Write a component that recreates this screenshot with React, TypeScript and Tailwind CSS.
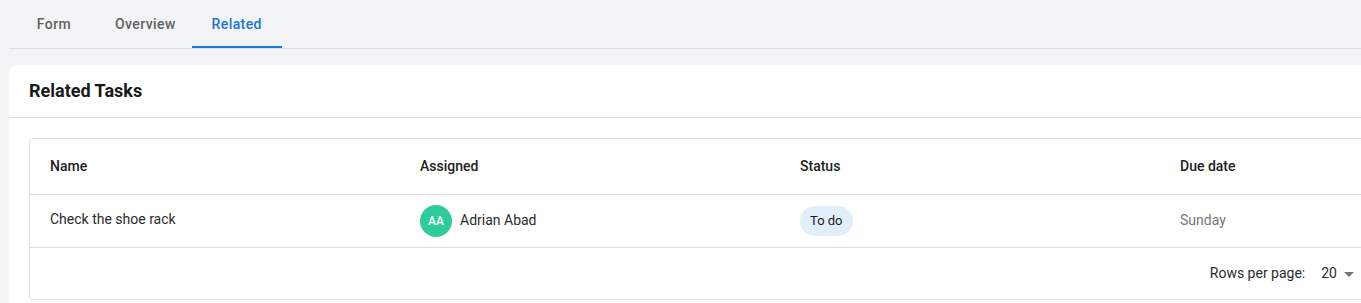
import React, { useState } from 'react';

const tabs = ['Form', 'Overview', 'Related'];

const tasks = [
  { id: 1, name: 'Check the shoe rack', assignee: 'Adrian Abad', initials: 'AA', status: 'To do', due: 'Sunday' },
];

const App: React.FC = () => {
  const [activeTab, setActiveTab] = useState('Related');

  return (
    <div className="h-[303px] w-full overflow-hidden bg-[#f2f3f5] font-['Roboto',_'Liberation_Sans',_sans-serif] text-[#212121]">
      <div className="w-[1580px] pl-[9px]">
        {/* Tabs */}
        <div className="flex h-[49px] border-b border-[#dcdde1]">
          {tabs.map((tab) => (
            <button
              key={tab}
              onClick={() => setActiveTab(tab)}
              className={`relative h-[48px] min-w-[90px] px-4 text-[14px] font-medium tracking-[0.4px] ${activeTab === tab ? 'text-[#1976d2]' : 'text-[#616161]'}`}
            >
              {tab}
              {activeTab === tab && <span className="absolute bottom-0 left-0 right-0 h-[2px] bg-[#1976d2]" />}
            </button>
          ))}
        </div>

        {/* Card */}
        <div className="mt-4 rounded-lg bg-white">
          <div className="flex h-[53px] items-center border-b border-[#e0e0e0] px-5 pb-[2px]">
            <h2 className="text-[18px] font-bold text-[#1a1a1a]">Related Tasks</h2>
          </div>
          <div className="p-5">
            <div className="rounded border border-[#e0e0e0]">
              <div className="grid h-[56px] grid-cols-[370px_380px_380px_1fr] items-center border-b border-[#e0e0e0] text-[14px] font-medium">
                <div className="px-5">Name</div>
                <div className="px-5">Assigned</div>
                <div className="px-5">Status</div>
                <div className="px-5">Due date</div>
              </div>
              {tasks.map((t) => (
                <div key={t.id} className="grid h-[53px] grid-cols-[370px_380px_380px_1fr] items-center border-b border-[#e0e0e0] text-[14px]">
                  <div className="px-5 pb-[3px] text-[#2b2b2b]">{t.name}</div>
                  <div className="flex items-center gap-2 px-5">
                    <span className="flex h-8 w-8 items-center justify-center rounded-full bg-[#2ecc9c] text-[12px] font-medium text-white">{t.initials}</span>
                    <span className="pb-[2px] text-[#2b2b2b]">{t.assignee}</span>
                  </div>
                  <div className="px-5">
                    <span className="inline-flex h-[30px] items-center rounded-full bg-[#e3eefb] px-[10px] text-[13px] text-[#1a1a1a]">{t.status}</span>
                  </div>
                  <div className="px-5 pb-[2px] text-[#777777]">{t.due}</div>
                </div>
              ))}
              <div className="flex h-[51px] items-center justify-end pr-[198px] text-[14px] text-[#2b2b2b]">
                <span>Rows per page:</span>
                <div className="ml-4 flex items-center">
                  <span>20</span>
                  <svg viewBox="0 0 24 24" className="h-6 w-6 fill-[#757575]"><path d="M7 10l5 5 5-5z" /></svg>
                </div>
              </div>
            </div>
          </div>
        </div>
      </div>
    </div>
  );
};

export default App;
